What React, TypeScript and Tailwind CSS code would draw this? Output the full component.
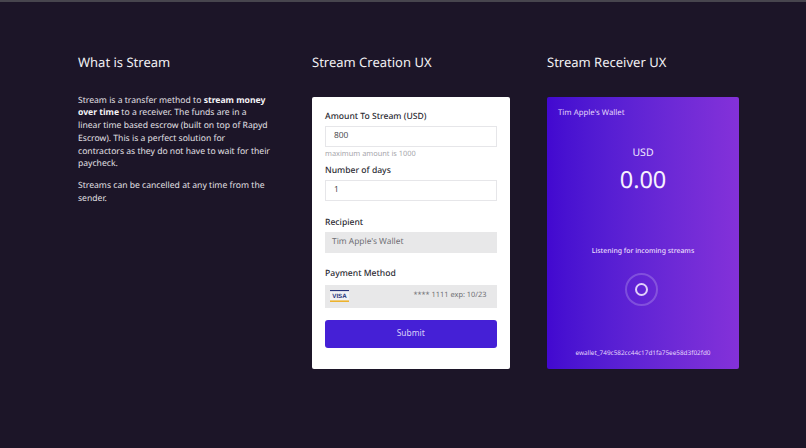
const Label = ({ children }: { children: string }) => (
  <label className="block text-[8.6px] leading-[12px] font-medium text-[#2b2b33] mb-[4px]">{children}</label>
)

const VisaCard = () => (
  <svg width="19" height="12" viewBox="0 0 19 12" className="shrink-0">
    <rect x="0" y="0" width="19" height="12" fill="#f1f1f4" />
    <rect x="0" y="0" width="19" height="1.1" fill="#26337a" />
    <rect x="0" y="10.4" width="19" height="1.6" fill="#ecb22e" />
    <text x="9.5" y="8" textAnchor="middle" fontSize="6.2" fontWeight="700" fill="#26337a" fontFamily="'Liberation Sans', sans-serif">VISA</text>
  </svg>
)

const App = () => {
  return (
    <div className="w-[806px] h-[448px] overflow-hidden bg-[#1c1528] font-['Noto_Sans','Open_Sans',sans-serif] [text-rendering:geometricPrecision]">
      <div className="h-[2px] bg-[#47454e]" />
      <div className="flex pl-[78px] pt-[51px]">
        <div className="w-[192px] mr-[42px]">
          <h2 className="text-[13px] leading-[18px] text-[#f1f0f3] mb-[22.5px]">What is Stream</h2>
          <p className="text-[8.6px] leading-[12.8px] text-[#e2e0e6] mb-[9px]">
            Stream is a transfer method to <b className="font-bold text-[#f4f3f6]">stream money over time</b> to a receiver. The funds are in a linear time based escrow (built on top of Rapyd Escrow). This is a perfect solution for contractors as they do not have to wait for their paycheck.
          </p>
          <p className="text-[8.6px] leading-[12.8px] text-[#e2e0e6]">
            Streams can be cancelled at any time from the sender.
          </p>
        </div>

        <div className="w-[197.5px] mr-[37.5px]">
          <h2 className="text-[13px] leading-[18px] text-[#f1f0f3] mb-[26px]">Stream Creation UX</h2>
          <div className="h-[271.5px] bg-white rounded-[2px] px-[13px] pt-[13px]">
            <Label>Amount To Stream (USD)</Label>
            <div className="h-[21px] border border-[#e6e6e9] flex items-center px-[8px] text-[8.4px] text-[#4a4a50]">800</div>
            <p className="text-[7.4px] leading-[11px] text-[#a6a6ab] mt-[1.5px] mb-[4px]">maximum amount is 1000</p>
            <Label>Number of days</Label>
            <div className="h-[21px] border border-[#e6e6e9] flex items-center px-[8px] text-[8.4px] text-[#4a4a50]">1</div>
            <div className="mt-[15px]">
              <Label>Recipient</Label>
              <div className="h-[21px] bg-[#e8e8e9] flex items-center px-[7px] text-[8.4px] text-[#6f6f74]">Tim Apple's Wallet</div>
            </div>
            <div className="mt-[14px]">
              <Label>Payment Method</Label>
              <div className="h-[23px] mt-[6px] bg-[#e8e8e9] flex items-center justify-between pl-[5px] pr-[10px] text-[7.4px] text-[#6f6f74]">
                <VisaCard />
                <span>**** 1111 exp: 10/23</span>
              </div>
            </div>
            <button className="mt-[12.5px] w-full h-[27.5px] rounded-[3px] bg-[#4520d6] text-[8.4px] text-[#d9d0fa]">Submit</button>
          </div>
        </div>

        <div className="w-[192px]">
          <h2 className="text-[13px] leading-[18px] text-[#f1f0f3] mb-[26px]">Stream Receiver UX</h2>
          <div className="h-[271.5px] rounded-[2px] bg-gradient-to-r from-[#4208d0] to-[#8431d9] flex flex-col items-center px-[11px] pt-[10px]">
            <p className="self-start text-[7.8px] leading-[13px] text-[#e3d6fb]">Tim Apple's Wallet</p>
            <p className="text-[10.5px] leading-[14px] text-[#efe8fd] mt-[26px]">USD</p>
            <p className="text-[23.5px] leading-[30px] text-[#f6f2fe] mt-[4px]">0.00</p>
            <p className="text-[6.9px] leading-[11px] font-medium text-[#eadffc] mt-[52px]">Listening for incoming streams</p>
            <div className="mt-[16px] mr-[4px] w-[33px] h-[33px] rounded-full border-2 border-white/20 flex items-center justify-center">
              <div className="w-[13px] h-[13px] rounded-full border-[2.5px] border-[#e0d0fa]" />
            </div>
            <p className="text-[6.4px] leading-[10px] text-[#e3d6fb] mt-[42px] whitespace-nowrap">ewallet_749c582cc44c17d1fa75ee58d3f02fd0</p>
          </div>
        </div>
      </div>
    </div>
  )
}

export default App
